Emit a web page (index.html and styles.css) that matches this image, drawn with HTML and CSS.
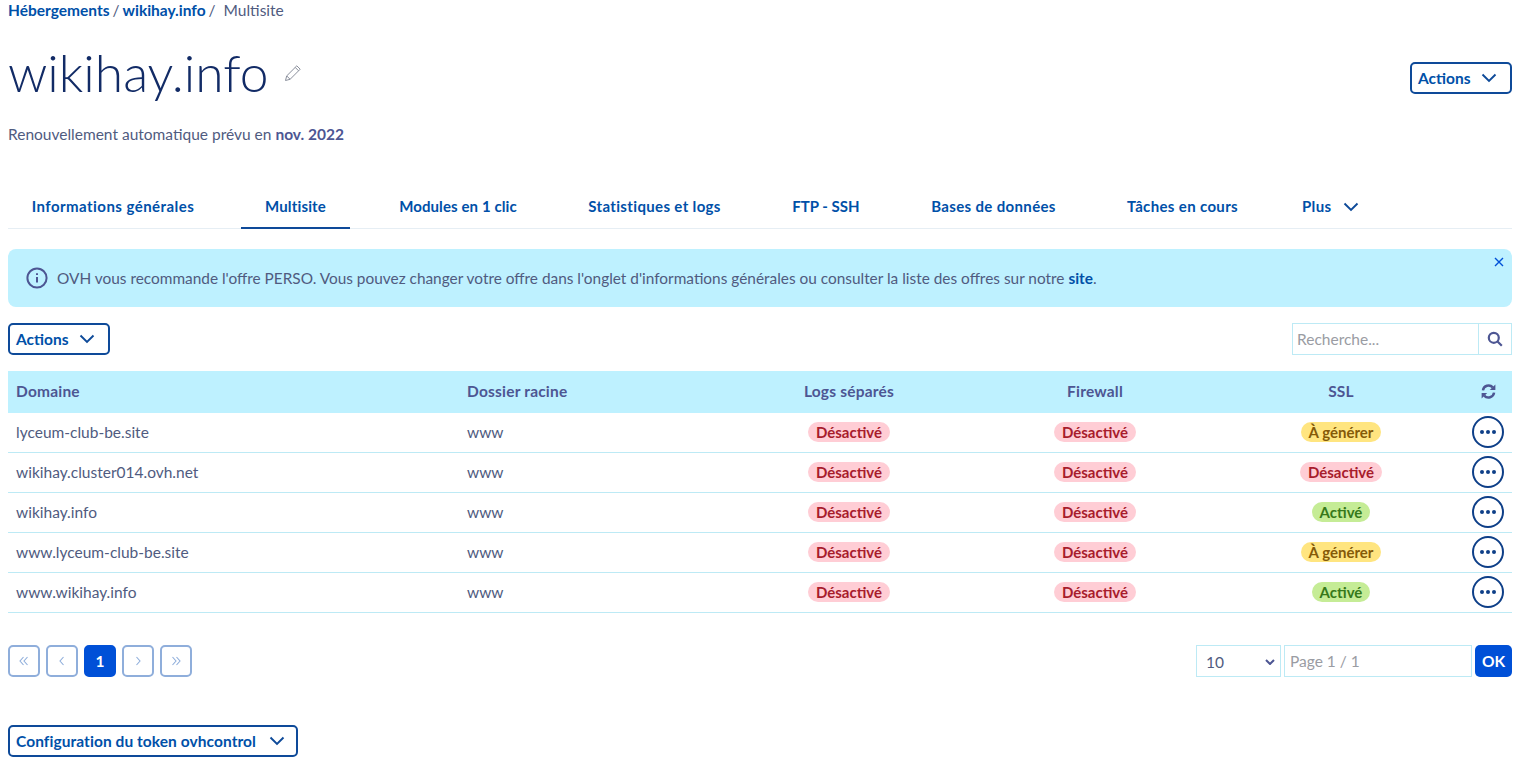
FILE: index.html
```html
<!DOCTYPE html>
<html lang="fr">
<head>
    <meta charset="UTF-8">
    <title>wikihay.info - Multisite</title>
    <link rel="stylesheet" href="styles.css">
</head>
<body>
    <!-- Breadcrumb -->
    <div class="breadcrumb">
        <a href="#">Hébergements</a> <span class="sep">/</span> <a href="#">wikihay.info</a> <span class="sep">/</span> <span class="current">Multisite</span>
    </div>

    <!-- Page header -->
    <div class="page-head">
        <div class="title-row">
            <h1>wikihay.info</h1>
            <svg class="pencil" width="18" height="18" viewBox="0 0 18 18" fill="none" stroke="#8a8f9c" stroke-width="1">
                <path d="M1.5 16.5l1.2-4.6L12.8 1.8l3.4 3.4L6.1 15.3z"/>
                <path d="M2.7 11.9l3.4 3.4M11.2 3.4l3.4 3.4"/>
            </svg>
        </div>
        <button class="btn-outline btn-actions head-actions">Actions
            <svg class="chevron" width="16" height="10" viewBox="0 0 16 10" fill="none"><path d="M1.5 1.5L8 8l6.5-6.5"/></svg>
        </button>
    </div>
    <p class="renew">Renouvellement automatique prévu en <strong>nov. 2022</strong></p>

    <!-- Tabs -->
    <ul class="tabs">
        <li class="tab t1">Informations générales</li>
        <li class="tab t2 active">Multisite</li>
        <li class="tab t3">Modules en 1 clic</li>
        <li class="tab t4">Statistiques et logs</li>
        <li class="tab t5">FTP - SSH</li>
        <li class="tab t6">Bases de données</li>
        <li class="tab t7">Tâches en cours</li>
        <li class="tab t8">Plus
            <svg class="chevron" width="16" height="10" viewBox="0 0 16 10" fill="none"><path d="M1.5 1.5L8 8l6.5-6.5"/></svg>
        </li>
    </ul>

    <!-- Info message -->
    <div class="alert">
        <svg class="alert-icon" width="22" height="22" viewBox="0 0 22 22" fill="none" stroke="#4d5693" stroke-width="2">
            <circle cx="11" cy="11" r="9.6"/>
            <path d="M11 10v5.5"/>
            <path d="M11 6.2v1.8"/>
        </svg>
        <span>OVH vous recommande l'offre PERSO. Vous pouvez changer votre offre dans l'onglet d'informations générales ou consulter la liste des offres sur notre <a href="#">site</a>.</span>
        <svg class="alert-close" width="10" height="10" viewBox="0 0 10 10" fill="none" stroke="#0050d7" stroke-width="1.4">
            <path d="M1 1l8 8M9 1l-8 8"/>
        </svg>
    </div>

    <!-- Toolbar -->
    <div class="toolbar">
        <button class="btn-outline btn-actions">Actions
            <svg class="chevron" width="16" height="10" viewBox="0 0 16 10" fill="none"><path d="M1.5 1.5L8 8l6.5-6.5"/></svg>
        </button>
        <div class="search">
            <input type="text" placeholder="Recherche...">
            <span class="search-btn">
                <svg width="16" height="16" viewBox="0 0 16 16" fill="none" stroke="#4d5693" stroke-width="2.2">
                    <circle cx="6.8" cy="6.8" r="5"/>
                    <path d="M10.5 10.5l4.3 4.3"/>
                </svg>
            </span>
        </div>
    </div>

    <!-- Domains table -->
    <table class="domains">
        <colgroup>
            <col class="c-domain">
            <col class="c-folder">
            <col class="c-status">
            <col class="c-status">
            <col class="c-status">
            <col class="c-action">
        </colgroup>
        <thead>
            <tr>
                <th>Domaine</th>
                <th>Dossier racine</th>
                <th class="center">Logs séparés</th>
                <th class="center">Firewall</th>
                <th class="center">SSL</th>
                <th class="center refresh">
                    <svg width="15" height="15" viewBox="0 0 14 14" fill="none" stroke="#4d5693" stroke-width="2.3">
                        <path d="M1.8 6A5.3 5.3 0 0 1 11 3.2"/>
                        <path d="M12.2 8A5.3 5.3 0 0 1 3 10.8"/>
                        <path d="M13.4 0.4v5.2H8.2z" fill="#4d5693" stroke="none"/>
                        <path d="M0.6 13.6V8.4h5.2z" fill="#4d5693" stroke="none"/>
                    </svg>
                </th>
            </tr>
        </thead>
        <tbody>
            <tr>
                <td>lyceum-club-be.site</td>
                <td>www</td>
                <td class="center"><span class="badge off">Désactivé</span></td>
                <td class="center"><span class="badge off">Désactivé</span></td>
                <td class="center"><span class="badge todo">À générer</span></td>
                <td class="center"><button class="more"><i></i><i></i><i></i></button></td>
            </tr>
            <tr>
                <td>wikihay.cluster014.ovh.net</td>
                <td>www</td>
                <td class="center"><span class="badge off">Désactivé</span></td>
                <td class="center"><span class="badge off">Désactivé</span></td>
                <td class="center"><span class="badge off">Désactivé</span></td>
                <td class="center"><button class="more"><i></i><i></i><i></i></button></td>
            </tr>
            <tr>
                <td>wikihay.info</td>
                <td>www</td>
                <td class="center"><span class="badge off">Désactivé</span></td>
                <td class="center"><span class="badge off">Désactivé</span></td>
                <td class="center"><span class="badge on">Activé</span></td>
                <td class="center"><button class="more"><i></i><i></i><i></i></button></td>
            </tr>
            <tr>
                <td>www.lyceum-club-be.site</td>
                <td>www</td>
                <td class="center"><span class="badge off">Désactivé</span></td>
                <td class="center"><span class="badge off">Désactivé</span></td>
                <td class="center"><span class="badge todo">À générer</span></td>
                <td class="center"><button class="more"><i></i><i></i><i></i></button></td>
            </tr>
            <tr>
                <td>www.wikihay.info</td>
                <td>www</td>
                <td class="center"><span class="badge off">Désactivé</span></td>
                <td class="center"><span class="badge off">Désactivé</span></td>
                <td class="center"><span class="badge on">Activé</span></td>
                <td class="center"><button class="more"><i></i><i></i><i></i></button></td>
            </tr>
        </tbody>
    </table>

    <!-- Pagination -->
    <div class="pager">
        <div class="pages">
            <span class="page">
                <svg width="10" height="10" viewBox="0 0 10 10"><path d="M4.5 1L1 5l3.5 4M8.5 1L5 5l3.5 4"/></svg>
            </span>
            <span class="page">
                <svg width="10" height="10" viewBox="0 0 10 10"><path d="M6.5 1L3 5l3.5 4"/></svg>
            </span>
            <span class="page current-page">1</span>
            <span class="page">
                <svg width="10" height="10" viewBox="0 0 10 10"><path d="M3.5 1L7 5 3.5 9"/></svg>
            </span>
            <span class="page">
                <svg width="10" height="10" viewBox="0 0 10 10"><path d="M1.5 1L5 5 1.5 9M5.5 1L9 5 5.5 9"/></svg>
            </span>
        </div>
        <div class="goto">
            <div class="size">10
                <svg width="10" height="6" viewBox="0 0 10 6" fill="none" stroke="#4d5693" stroke-width="2"><path d="M1 1l4 4 4-4"/></svg>
            </div>
            <input class="page-input" type="text" placeholder="Page 1 / 1">
            <button class="btn-ok">OK</button>
        </div>
    </div>

    <button class="btn-outline token">Configuration du token ovhcontrol
        <svg class="chevron" width="16" height="10" viewBox="0 0 16 10" fill="none"><path d="M1.5 1.5L8 8l6.5-6.5"/></svg>
    </button>
</body>
</html>
```

FILE: styles.css
```css
/* General */
body {
    margin: 0;
    padding: 0 12px 0 8px;
    font-family: "Lato", "Open Sans", sans-serif;
    font-size: 15.5px;
    color: #505b80;
    background: #fff;
}

a {
    color: #0050a8;
    font-weight: 700;
    text-decoration: none;
}

/* Breadcrumb */
.breadcrumb {
    height: 20px;
    line-height: 20px;
}

.breadcrumb .sep {
    margin: 0 -1px;
}

.current {
    margin-left: 5px;
}

/* Header */
.page-head {
    display: flex;
    justify-content: space-between;
    align-items: flex-start;
    margin-top: 20px;
    height: 64px;
}

.title-row {
    display: flex;
    align-items: center;
}

h1 {
    margin: 0;
    font-size: 51.5px;
    font-weight: 300;
    color: #122b66;
    line-height: 64px;
}

.pencil {
    margin-left: 16px;
    margin-top: 2px;
}

.head-actions {
    margin-top: 22px;
}

.renew {
    margin: 20px 0 0;
    line-height: 20px;
}

.renew strong {
    color: #4d5693;
}

/* Buttons */
.btn-outline {
    display: inline-flex;
    align-items: center;
    justify-content: space-between;
    box-sizing: border-box;
    height: 32px;
    padding: 0 13px 0 6px;
    background: #fff;
    border: 2px solid #0e4a99;
    border-radius: 5px;
    color: #0050a8;
    font-family: inherit;
    font-size: 15.5px;
    font-weight: 700;
    white-space: nowrap;
}

.btn-actions {
    width: 102px;
}

.chevron path {
    stroke: #0e4a99;
    stroke-width: 1.9;
}

/* Tabs */
.tabs {
    display: flex;
    list-style: none;
    margin: 40px 0 0;
    padding: 0;
    height: 44px;
    border-bottom: 1px solid #e6eef4;
}

.tab {
    box-sizing: border-box;
    height: 45px;
    padding-top: 13px;
    text-align: center;
    color: #0050a8;
    font-weight: 700;
    font-size: 15px;
    letter-spacing: 0.35px;
    white-space: nowrap;
}

.t1 { width: 210px; margin-right: 23px; letter-spacing: 0.45px; }
.t2 { width: 109px; margin-right: 25px; letter-spacing: 0.15px; }
.t3 { width: 166px; margin-right: 23px; letter-spacing: 0.1px; }
.t4 { width: 181px; margin-right: 24px; }
.t5 { width: 114px; margin-right: 25px; letter-spacing: 0; }
.t6 { width: 171px; margin-right: 25px; }
.t7 { width: 157px; margin-right: 17px; }

.t8 {
    display: flex;
    gap: 12px;
    padding-left: 24px;
}

.t8 .chevron {
    margin-top: 5px;
}

.tab.active {
    border-bottom: 2px solid #0e4a99;
}

/* Alert */
.alert {
    display: flex;
    align-items: center;
    position: relative;
    box-sizing: border-box;
    height: 58px;
    margin-top: 20px;
    padding-left: 18px;
    background: #bef1ff;
    border-radius: 8px;
    font-size: 15.4px;
}

.alert-icon {
    margin-right: 9px;
}

.alert a {
    color: #0050a8;
}

.alert-close {
    position: absolute;
    top: 8px;
    right: 8px;
}

/* Toolbar */
.toolbar {
    display: flex;
    justify-content: space-between;
    margin-top: 16px;
    height: 32px;
}

.search {
    display: flex;
    width: 220px;
    box-sizing: border-box;
    border: 1px solid #bdeaf5;
}

.search input {
    flex: 1;
    min-width: 0;
    box-sizing: border-box;
    padding: 0 4px;
    border: none;
    outline: none;
    font-family: inherit;
    font-size: 15.5px;
}

input::placeholder {
    color: #9a9ca3;
}

.search-btn {
    display: flex;
    align-items: center;
    justify-content: center;
    width: 32px;
    border-left: 1px solid #bdeaf5;
}

/* Table */
.domains {
    width: 1504px;
    margin-top: 16px;
    border-spacing: 0;
    border-collapse: separate;
    table-layout: fixed;
}

.c-domain { width: 451px; }
.c-folder { width: 267px; }
.c-status { width: 246px; }
.c-action { width: 48px; }

th, td {
    padding: 0 8px;
    text-align: left;
    box-sizing: border-box;
}

th {
    height: 42px;
    padding-bottom: 2px;
    background: #bef1ff;
    color: #4d5693;
    font-weight: 700;
    letter-spacing: 0.2px;
}

td {
    height: 40px;
    padding-bottom: 1px;
    border-bottom: 1px solid #bdeaf5;
}

.center {
    text-align: center;
}

.refresh svg {
    display: block;
    margin: 0 0 0 9px;
}

.badge {
    display: inline-block;
    height: 20px;
    line-height: 20px;
    padding: 0 8px;
    border-radius: 10px;
    font-size: 15px;
    font-weight: 700;
}

.off {
    background: #ffcdd5;
    color: #a81c2c;
}

.todo {
    background: #ffe580;
    color: #855a08;
}

.on {
    background: #c5ec96;
    color: #36791a;
}

.more {
    display: flex;
    align-items: center;
    justify-content: center;
    gap: 2px;
    box-sizing: border-box;
    width: 32px;
    height: 32px;
    padding: 0;
    background: #fff;
    border: 2px solid #0e3f88;
    border-radius: 50%;
}

.more i {
    width: 4px;
    height: 4px;
    border-radius: 50%;
    background: #0e3f88;
}

/* Pagination */
.pager {
    display: flex;
    justify-content: space-between;
    margin-top: 32px;
    height: 32px;
}

.pages {
    display: flex;
    gap: 6px;
}

.page {
    display: flex;
    align-items: center;
    justify-content: center;
    box-sizing: border-box;
    width: 32px;
    height: 32px;
    border: 2px solid #8faedb;
    border-radius: 5px;
}

.page path {
    fill: none;
    stroke: #8faedb;
    stroke-width: 1.1;
}

.current-page {
    background: #0050d7;
    border-color: #0050d7;
    color: #fff;
    font-size: 15.5px;
    font-weight: 700;
}

.goto {
    display: flex;
}

.size {
    display: flex;
    align-items: center;
    justify-content: space-between;
    box-sizing: border-box;
    width: 85px;
    padding: 2px 5px 0 9px;
    border: 1px solid #bdeaf5;
}

.page-input {
    box-sizing: border-box;
    width: 188px;
    margin: 0 3px;
    padding: 0 5px;
    border: 1px solid #bdeaf5;
    outline: none;
    font-family: inherit;
    font-size: 15.5px;
}

.btn-ok {
    width: 37px;
    padding: 0;
    border: none;
    border-radius: 5px;
    background: #0050d7;
    color: #fff;
    font-family: inherit;
    font-size: 15.5px;
    font-weight: 700;
}

.token {
    display: flex;
    width: 290px;
    margin-top: 48px;
    padding-right: 11px;
    letter-spacing: 0.07px;
}
```
